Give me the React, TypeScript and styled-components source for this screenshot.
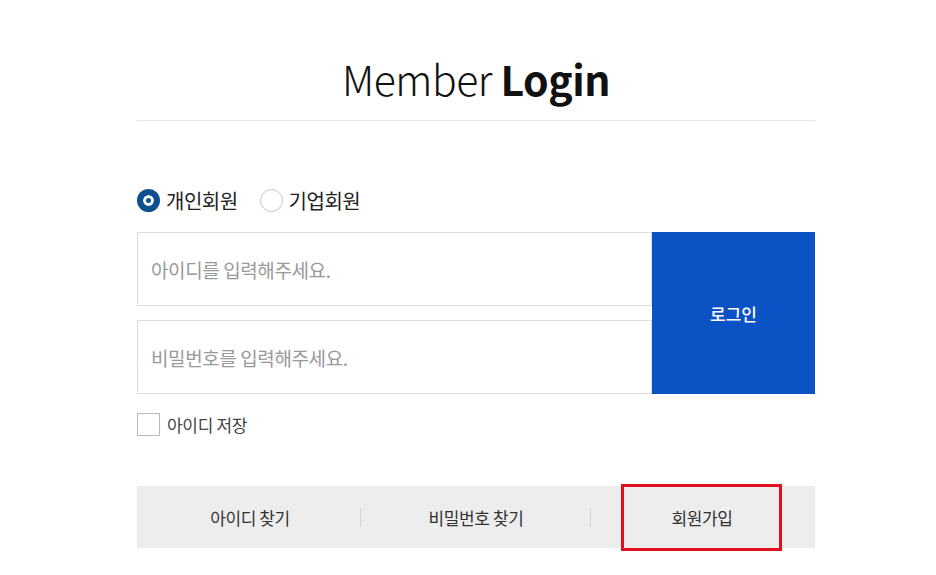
import styled, { createGlobalStyle } from 'styled-components';

const GlobalStyle = createGlobalStyle`
  body {
    margin: 0;
    background: #fff;
    font-family: "Noto Sans CJK KR", "Noto Sans", sans-serif;
  }
`;

const Page = styled.div`
  width: 678px;
  margin-left: 137px;
  padding-top: 50px;
  padding-bottom: 20px;
`;

const Title = styled.h1`
  margin: 0;
  padding-bottom: 14px;
  border-bottom: 1px solid #e6e6e6;
  text-align: center;
  font-family: "Noto Sans CJK KR", sans-serif;
  font-size: 41px;
  line-height: 56px;
  font-weight: 300;
  color: #111;
  letter-spacing: -0.5px;

  strong {
    font-weight: 700;
  }
`;

const TypeRow = styled.div`
  display: flex;
  align-items: center;
  gap: 22px;
  margin-top: 62px;
  height: 34px;
`;

const RadioLabel = styled.label`
  display: flex;
  align-items: center;
  gap: 6px;
  font-family: "Noto Sans CJK KR", sans-serif;
  font-size: 20px;
  color: #222;
  letter-spacing: -0.5px;
`;

const RadioCircle = styled.span<{ $checked?: boolean }>`
  width: 23px;
  height: 23px;
  box-sizing: border-box;
  border-radius: 50%;
  background: ${({ $checked }) => ($checked ? '#0f4f8e' : '#fff')};
  border: ${({ $checked }) => ($checked ? '6px solid #0f4f8e' : '1px solid #c8c8c8')};
  box-shadow: ${({ $checked }) => ($checked ? 'inset 0 0 0 3px #fff' : 'none')};
`;

const FormRow = styled.div`
  display: flex;
  margin-top: 15px;
`;

const Inputs = styled.div`
  flex: 1;
  display: flex;
  flex-direction: column;
  gap: 14px;
`;

const Input = styled.input`
  height: 74px;
  box-sizing: border-box;
  border: 1px solid #dcdcdc;
  padding: 0 13px;
  font-family: "Noto Sans CJK KR", sans-serif;
  font-size: 19px;
  outline: none;
  letter-spacing: -0.4px;

  &::placeholder {
    color: #999;
  }
`;

const LoginButton = styled.button`
  width: 163px;
  border: none;
  background: #0b52c4;
  color: #fff;
  font-family: "Noto Sans CJK KR", sans-serif;
  font-size: 17px;
  font-weight: 500;
  padding: 0;
`;

const SaveRow = styled.label`
  display: flex;
  align-items: center;
  gap: 7px;
  margin-top: 18px;
  font-family: "Noto Sans CJK KR", sans-serif;
  font-size: 17px;
  color: #444;
  letter-spacing: -0.3px;
`;

const CheckBox = styled.span`
  width: 23px;
  height: 23px;
  box-sizing: border-box;
  border: 1px solid #bbb;
  background: #fff;
`;

const LinkBar = styled.div`
  display: grid;
  grid-template-columns: repeat(3, 1fr);
  height: 62px;
  margin-top: 49px;
  background: #ededed;
`;

const LinkItem = styled.a<{ $divider?: number }>`
  position: relative;
  display: flex;
  align-items: center;
  justify-content: center;
  font-family: "Noto Sans CJK KR", sans-serif;
  font-size: 17px;
  color: #333;
  text-decoration: none;
  letter-spacing: -0.4px;

  &::after {
    content: '';
    display: ${({ $divider }) => ($divider !== undefined ? 'block' : 'none')};
    position: absolute;
    right: ${({ $divider }) => $divider ?? 0}px;
    top: 22px;
    width: 1px;
    height: 19px;
    background: #d4d4d4;
  }
`;

const Highlight = styled.span`
  position: absolute;
  left: 32px;
  top: -2px;
  width: 161px;
  height: 67px;
  box-sizing: border-box;
  border: 3px solid #e3101c;
  pointer-events: none;
`;

export default function App() {
  return (
    <>
      <GlobalStyle />
      <Page>
        <Title>
          Member <strong>Login</strong>
        </Title>
        <TypeRow>
          <RadioLabel>
            <RadioCircle $checked />
            개인회원
          </RadioLabel>
          <RadioLabel>
            <RadioCircle />
            기업회원
          </RadioLabel>
        </TypeRow>
        <FormRow>
          <Inputs>
            <Input placeholder="아이디를 입력해주세요." />
            <Input type="password" placeholder="비밀번호를 입력해주세요." />
          </Inputs>
          <LoginButton>로그인</LoginButton>
        </FormRow>
        <SaveRow>
          <CheckBox />
          아이디 저장
        </SaveRow>
        <LinkBar>
          <LinkItem href="#" $divider={2}>아이디 찾기</LinkItem>
          <LinkItem href="#" $divider={-2}>비밀번호 찾기</LinkItem>
          <LinkItem href="#">
            회원가입
            <Highlight />
          </LinkItem>
        </LinkBar>
      </Page>
    </>
  );
}
